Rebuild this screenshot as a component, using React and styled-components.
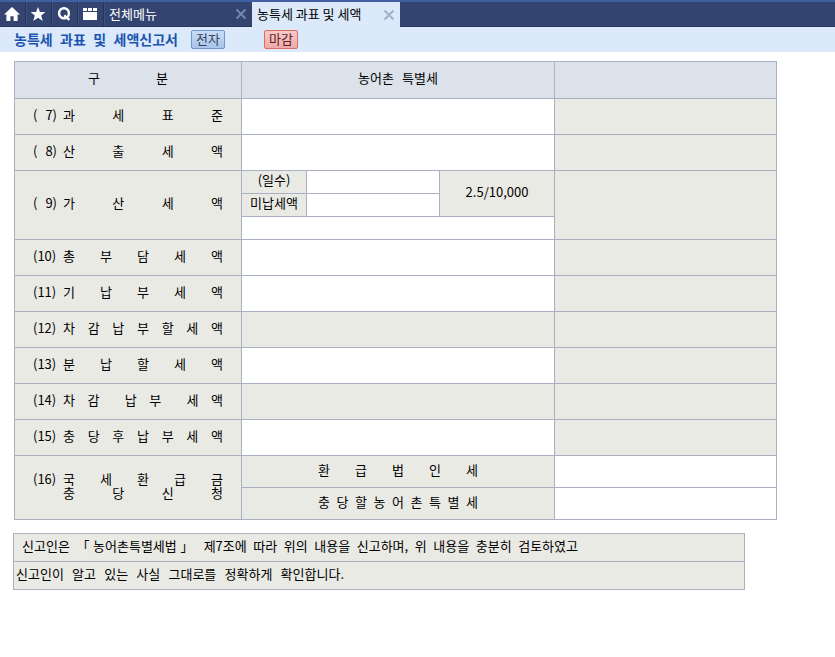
import React from "react";
import styled, { createGlobalStyle } from "styled-components";

const line = "#a9b0c4";
const shade = "#eaeae5";

const GlobalStyle = createGlobalStyle`
  * { box-sizing: border-box; }
  body {
    margin: 0;
    background: #fff;
    color: #000;
    font: 13px/16px "Noto Sans CJK KR", sans-serif;
  }
  button, input { font: inherit; color: inherit; }
`;

const TopBar = styled.header`
  display: flex;
  height: 27px;
  background: #32446f;
  border-top: 2px solid #3f5fa0;
  border-bottom: 1px solid #263456;
`;

const IconButton = styled.button`
  display: flex;
  align-items: center;
  justify-content: center;
  width: 26px;
  padding: 0 1px 0 0;
  border: 0;
  border-right: 1px solid #26355a;
  background: transparent;
  box-shadow: 1px 0 #3d5080;
  svg { display: block; }
`;

const Tab = styled.div`
  display: flex;
  align-items: center;
  justify-content: space-between;
  width: 148px;
  height: ${(p) => (p.$active ? "25px" : "24px")};
  padding: 0 5px;
  color: ${(p) => (p.$active ? "#000" : "#fff")};
  background: ${(p) => (p.$active ? "#dce9fa" : "transparent")};
  white-space: nowrap;
`;

const TabName = styled.span`
  padding-bottom: 1px;
`;

const CloseButton = styled.button`
  display: flex;
  padding: 0;
  border: 0;
  background: transparent;
  color: ${(p) => (p.$active ? "#a3b1c8" : "#7485ad")};
`;

const TitleBar = styled.div`
  display: flex;
  align-items: center;
  height: 25px;
  padding-left: 14px;
  background: #dce9fa;
`;

const Title = styled.h1`
  width: 164px;
  margin: 0 13px 0 0;
  padding-bottom: 2px;
  color: #1c55b0;
  font-size: 14px;
  line-height: 20px;
  font-weight: 700;
  white-space: nowrap;
  text-align-last: justify;
`;

const ActionButton = styled.button`
  width: 34px;
  height: 19px;
  margin-right: 39px;
  padding: 0 0 1px;
  line-height: 16px;
  border-radius: 2px;
  border: 1px solid ${(p) => (p.$danger ? "#d9705f" : "#7396cf")};
  color: ${(p) => (p.$danger ? "#5a1f1f" : "#33445f")};
  background: ${(p) =>
    p.$danger
      ? "linear-gradient(#f8c9c9, #efa9a9)"
      : "linear-gradient(#c9dcf6, #a9c4ea)"};
`;

const Main = styled.main`
  padding: 9px 14px 20px;
`;

const Table = styled.table`
  width: 100%;
  max-width: 763px;
  border-collapse: collapse;
  table-layout: fixed;
`;

const Column = styled.col`
  width: ${(p) => p.$width}px;
`;

const Row = styled.tr`
  height: ${(p) => p.$height || 36}px;
`;

const HeadCell = styled.th`
  padding: 0 0 4px;
  border: 1px solid ${line};
  background: #dbe2ea;
  font-weight: 400;
`;

const LabelCell = styled.th`
  padding: 0 ${(p) => (p.$wide ? 18 : 0)}px 4px;
  border: 1px solid ${line};
  background: ${shade};
  font-weight: 400;
`;

const Cell = styled.td`
  padding: 0;
  border: 1px solid ${line};
  background: ${(p) => (p.$shaded ? shade : "#fff")};
  text-align: center;
`;

const RateCell = styled(Cell)`
  padding-bottom: 4px;
`;

const Field = styled.input`
  display: block;
  width: 100%;
  height: 22px;
  padding: 0 6px;
  border: 0;
  outline: 0;
  background: transparent;
  text-align: right;
`;

const Item = styled.div`
  display: flex;
  gap: 6px;
`;

const ItemNumber = styled.span`
  flex: 0 0 24px;
  text-align: left;
  text-align-last: ${(p) => (p.$short ? "justify" : "left")};
  line-height: 14px;
  white-space: nowrap;
`;

const ItemName = styled.span`
  flex: 1;
  line-height: 14px;
  text-align-last: justify;
`;

const Spread = styled.div`
  max-width: ${(p) => p.$width}px;
  margin: 0 auto;
  text-align-last: justify;
`;

const Notice = styled.section`
  max-width: 732px;
  margin: 13px 0 0 -1px;
  border: 1px solid ${line};
  background: ${shade};
`;

const NoticeLine = styled.p`
  margin: 0;
  min-height: ${(p) => (p.$first ? 28 : 27)}px;
  padding: 4px ${(p) => (p.$first ? 8 : 2)}px;
  border-bottom: ${(p) => (p.$first ? `1px solid ${line}` : "0")};
`;

const NoticeText = styled.span`
  display: block;
  max-width: ${(p) => p.$width}px;
  text-align-last: justify;
`;

function CloseIcon() {
  return (
    <svg width="12" height="12" viewBox="0 0 12 12" fill="none" stroke="currentColor" strokeWidth="2">
      <path d="M1.5 1.5l9 9M10.5 1.5l-9 9" />
    </svg>
  );
}

function Label({ number, rowSpan, children }) {
  return (
    <LabelCell scope="row" rowSpan={rowSpan} $wide>
      <Item>
        <ItemNumber $short={number.includes(" ")}>{number}</ItemNumber>
        <ItemName>{children}</ItemName>
      </Item>
    </LabelCell>
  );
}

function SimpleRow({ number, name, locked }) {
  return (
    <Row>
      <Label number={number}>{name}</Label>
      <Cell colSpan={3} $shaded={locked}>
        {!locked && <Field aria-label={name} />}
      </Cell>
      <Cell $shaded />
    </Row>
  );
}

const columnWidths = [227, 65, 133, 115, 222];

const totals = [
  { number: "(10)", name: "총 부 담 세 액" },
  { number: "(11)", name: "기 납 부 세 액" },
  { number: "(12)", name: "차 감 납 부 할 세 액", locked: true },
  { number: "(13)", name: "분 납 할 세 액" },
  { number: "(14)", name: "차 감\u00a0 납 부\u00a0 세 액", locked: true },
  { number: "(15)", name: "충 당 후 납 부 세 액" },
];

export default function App() {
  return (
    <>
      <GlobalStyle />
      <TopBar>
        <IconButton aria-label="홈">
          <svg width="16" height="14" viewBox="0 0 16 14" fill="#fff">
            <path d="M8 0L0 7.6h2.4V14h4V9.2h3.2V14h4V7.6H16z" />
          </svg>
        </IconButton>
        <IconButton aria-label="즐겨찾기">
          <svg width="16" height="14" viewBox="0 0 16 14" fill="#fff">
            <path d="M8 0l1.9 5H15.4L11.2 8.4 12.8 14 8 10.8 3.2 14 4.8 8.4.6 5h5.5z" />
          </svg>
        </IconButton>
        <IconButton aria-label="검색">
          <svg width="14" height="14" viewBox="0 0 14 14" fill="none" stroke="#fff" strokeWidth="2.4">
            <ellipse cx="7" cy="6.3" rx="4.9" ry="5.1" />
            <path d="M7.2 8.4l5.2 4.5" />
          </svg>
        </IconButton>
        <IconButton aria-label="메뉴">
          <svg width="14" height="12" viewBox="0 0 14 12" fill="#fff">
            <path d="M0 0h4v3H0zM5 0h4v3H5zM10 0h4v3h-4zM0 4h14v8H0z" />
          </svg>
        </IconButton>
        <Tab>
          <TabName>전체메뉴</TabName>
          <CloseButton aria-label="전체메뉴 닫기"><CloseIcon /></CloseButton>
        </Tab>
        <Tab $active>
          <TabName>농특세 과표 및 세액</TabName>
          <CloseButton $active aria-label="농특세 과표 및 세액 닫기"><CloseIcon /></CloseButton>
        </Tab>
      </TopBar>
      <TitleBar>
        <Title>농특세 과표 및 세액신고서</Title>
        <ActionButton>전자</ActionButton>
        <ActionButton $danger>마감</ActionButton>
      </TitleBar>
      <Main>
        <Table>
          <colgroup>
            {columnWidths.map((width, i) => <Column key={i} $width={width} />)}
          </colgroup>
          <thead>
            <Row $height={37}>
              <HeadCell scope="col"><Spread $width={80}>구 분</Spread></HeadCell>
              <HeadCell scope="col" colSpan={3}><Spread $width={80}>농어촌 특별세</Spread></HeadCell>
              <HeadCell />
            </Row>
          </thead>
          <tbody>
            <SimpleRow number="( 7)" name="과 세 표 준" />
            <SimpleRow number="( 8)" name="산 출 세 액" />
            <Row $height={23}>
              <Label number="( 9)" rowSpan={3}>가 산 세 액</Label>
              <LabelCell scope="row">(일수)</LabelCell>
              <Cell><Field aria-label="일수" /></Cell>
              <RateCell rowSpan={2} $shaded>2.5/10,000</RateCell>
              <Cell rowSpan={3} $shaded />
            </Row>
            <Row $height={23}>
              <LabelCell scope="row">미납세액</LabelCell>
              <Cell><Field aria-label="미납세액" /></Cell>
            </Row>
            <Row $height={23}>
              <Cell colSpan={3}><Field aria-label="가산세액" /></Cell>
            </Row>
            {totals.map((row) => <SimpleRow key={row.number} {...row} />)}
            <Row $height={32}>
              <Label number="(16)" rowSpan={2}>
                국 세 환 급 금<br />충 당 신 청
              </Label>
              <LabelCell scope="row" colSpan={3}><Spread $width={160}>환 급 법 인 세</Spread></LabelCell>
              <Cell><Field aria-label="환급법인세" /></Cell>
            </Row>
            <Row $height={32}>
              <LabelCell scope="row" colSpan={3}><Spread $width={160}>충 당 할 농 어 촌 특 별 세</Spread></LabelCell>
              <Cell><Field aria-label="충당할 농어촌특별세" /></Cell>
            </Row>
          </tbody>
        </Table>
        <Notice>
          <NoticeLine $first>
            <NoticeText $width={556}>신고인은 「농어촌특별세법」 제7조에 따라 위의 내용을 신고하며, 위 내용을 충분히 검토하였고</NoticeText>
          </NoticeLine>
          <NoticeLine>
            <NoticeText $width={328}>신고인이 알고 있는 사실 그대로를 정확하게 확인합니다.</NoticeText>
          </NoticeLine>
        </Notice>
      </Main>
    </>
  );
}
